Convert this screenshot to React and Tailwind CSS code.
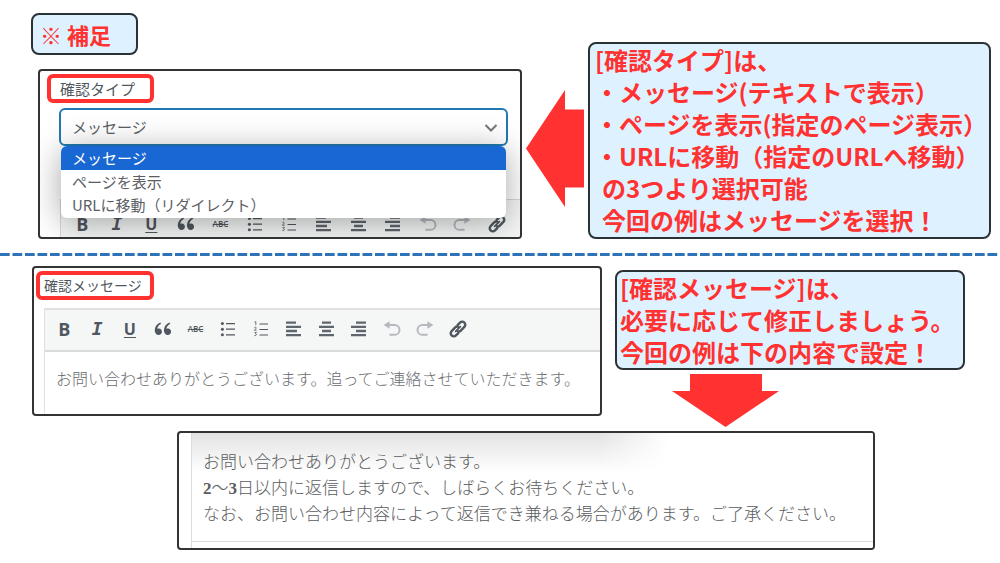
import { useState } from "react";
import clsx from "clsx";
import { RiDoubleQuotesL } from "react-icons/ri";

const options = ["メッセージ", "ページを表示", "URLに移動（リダイレクト）"];

const sans = "font-['Noto_Sans_CJK_JP',sans-serif]";
const serif = "font-['Liberation_Serif','Noto_Sans_CJK_JP',serif]";

const Bars = ({ rows }) => (
  <svg viewBox="0 0 16 16" className="size-4 text-[#5f666d]" stroke="currentColor" strokeWidth="2.3">
    {rows.map(([x1, x2], i) => (
      <path key={i} d={`M${x1} ${1.6 + i * 4.2}H${x2}`} />
    ))}
  </svg>
);

const BulletList = () => (
  <svg viewBox="0 0 16 16" className="size-4" fill="currentColor">
    <circle cx="2.4" cy="2.6" r="1.5" />
    <circle cx="2.4" cy="8.2" r="1.5" />
    <circle cx="2.4" cy="13.8" r="1.5" />
    <path d="M6 2h9v1.2H6zM6 7.6h9v1.2H6zM6 13.2h9v1.2H6z" />
  </svg>
);

const NumberedList = () => (
  <svg viewBox="0 0 16 16" className="size-4" fill="none" stroke="currentColor">
    <path d="M6.5 3H15M6.5 8.5H15M6.5 14H15" strokeWidth="1.2" />
    <path
      d="M1.6 1.2L2.8.6v3.6M1.4 6.6c.6-.9 2-.5 1.8.5L1.4 9.2h2.2M1.4 11.4h2L2.4 12.8c1.6 0 1.4 2.2-1 1.8"
      strokeWidth="0.8"
    />
  </svg>
);

const Undo = ({ flip }) => (
  <svg
    viewBox="0 0 18 16"
    className={clsx("h-4 w-[18px] text-[#b4b9be]", flip && "-scale-x-100")}
    fill="none"
    stroke="currentColor"
    strokeWidth="2"
  >
    <path d="M5 4h6.6a4.9 4.9 0 0 1 0 9.8H6.4" />
    <path d="M6.6.2v7.6L.6 4z" fill="currentColor" stroke="none" />
  </svg>
);

const Chain = () => (
  <svg
    viewBox="0 0 20 20"
    className="size-[22px]"
    fill="none"
    stroke="currentColor"
    strokeWidth="2.2"
    strokeLinecap="round"
  >
    <g transform="rotate(-45 10 10)">
      <path d="M7.6 12.8H4.6a2.8 2.8 0 0 1 0-5.6h4.6a2.8 2.8 0 0 1 2.4 1.4" />
      <path d="M12.4 7.2h3a2.8 2.8 0 0 1 0 5.6h-4.6a2.8 2.8 0 0 1-2.4-1.400" />
      <path d="M7 10h6" strokeWidth="1.6" />
    </g>
  </svg>
);

const tools = [
  ["Bold", <span className="font-['Open_Sans',sans-serif] text-lg/4 font-bold">B</span>],
  ["Italic", <span className="font-['DejaVu_Sans_Mono',monospace] text-lg/4 font-bold italic">I</span>],
  ["Underline", <span className="font-['Open_Sans',sans-serif] text-base/4 font-bold underline underline-offset-2">U</span>],
  ["Blockquote", <RiDoubleQuotesL className="size-[22px]" />],
  ["Strikethrough", <span className="font-['Open_Sans',sans-serif] text-[8px]/4 font-semibold line-through">ABC</span>],
  ["Bulleted list", <BulletList />],
  ["Numbered list", <NumberedList />],
  ["Align left", <Bars rows={[[0, 10], [0, 15], [0, 11], [0, 15]]} />],
  ["Align center", <Bars rows={[[3, 12], [0, 15], [3, 12], [0, 15]]} />],
  ["Align right", <Bars rows={[[5, 15], [0, 15], [5, 15], [0, 15]]} />],
  ["Undo", <Undo />],
  ["Redo", <Undo flip />],
  ["Link", <Chain />],
];

const Toolbar = ({ className }) => (
  <div role="toolbar" className={clsx("grid grid-cols-13 text-[#50575e]", className)}>
    {tools.map(([name, icon]) => (
      <button key={name} type="button" aria-label={name} className="flex h-5 items-center justify-center">
        {icon}
      </button>
    ))}
  </div>
);

const Callout = ({ children, className }) => (
  <div
    className={clsx(
      "rounded-lg border-2 border-[#2b3236] bg-[#def1ff] text-2xl/8 font-bold whitespace-nowrap text-[#ff3131]",
      className
    )}
  >
    {children}
  </div>
);

const panel = "overflow-hidden rounded-sm border-2 border-[#333] bg-white";
const fieldLabel =
  "rounded-md border-4 border-[#ff3131] bg-white text-[#50575e]";

const TypePanel = () => {
  const [value, setValue] = useState(options[0]);

  return (
    <div className={clsx(panel, "ml-[7px] pt-[3px]")}>
      <label htmlFor="confirm-type" className={clsx(fieldLabel, "ml-[7px] block w-[107px] pl-[9px] text-[15px]/[21px]")}>
        確認タイプ
      </label>
      <div className="relative z-10 mt-[5px] mr-3 ml-[19px]">
        <select
          id="confirm-type"
          value={value}
          onChange={(e) => setValue(e.target.value)}
          className="block h-[38px] w-full appearance-none rounded-md border-2 border-[#2079b0] bg-white pl-[11px] text-[15px] text-[#5b6065] outline-none"
        >
          {options.map((o) => (
            <option key={o}>{o}</option>
          ))}
        </select>
        <svg
          viewBox="0 0 14 8"
          className="pointer-events-none absolute top-4 right-2.5 h-2 w-3.5"
          fill="none"
          stroke="#777"
          strokeWidth="2"
        >
          <path d="M1.5 1L7 6.5 12.5 1" />
        </svg>
        <ul
          role="listbox"
          aria-label="確認タイプ"
          className="absolute inset-x-0.5 top-full overflow-hidden rounded-md bg-white pb-0.5 text-[15px]/[23px] text-[#5b6065] shadow-[0_4px_32px_rgba(0,0,0,0.35)]"
        >
          {options.map((o) => (
            <li
              key={o}
              role="option"
              aria-selected={o === value}
              onClick={() => setValue(o)}
              className={clsx("pl-[11px]", o === value && "bg-[#1967d2] pb-px text-white")}
            >
              {o}
            </li>
          ))}
        </ul>
      </div>
      <div className="mt-[53px] ml-5 border-t border-l border-[#d5d7d7] bg-[#f4f6f6] pt-3.5 pr-1.5 pb-[3px] pl-1">
        <Toolbar />
      </div>
    </div>
  );
};

const MessagePanel = () => (
  <div className={clsx(panel, "pt-[3px]")}>
    <label htmlFor="confirm-message" className={clsx(fieldLabel, "ml-0.5 block w-[118px] pl-1 text-sm/[21px]")}>
      確認メッセージ
    </label>
    <div className="mt-2 ml-2.5 border-t-2 border-l border-[#e0e2e2]">
      <div className="border-b-2 border-[#dadcdc] bg-[#f5f7f7] pt-[9px] pb-[11px] pl-[3px]">
        <Toolbar className="max-w-[426px]" />
      </div>
      <textarea
        id="confirm-message"
        rows={1}
        defaultValue="お問い合わせありがとうございます。追ってご連絡させていただきます。"
        className={clsx(
          "block h-[62px] w-full resize-none overflow-hidden pt-4 pl-[11px] text-base/6 font-light text-[#6a6d70] outline-none",
          serif
        )}
      />
    </div>
  </div>
);

export default function App() {
  return (
    <main className={clsx("min-h-screen bg-white", sans)}>
      <section className="flex items-end gap-1 pt-[13px] pr-[9px] pl-[31px]">
        <div className="flex-[491] basis-0">
          <h1 className="mb-3.5 w-[107px] rounded-lg border-2 border-[#2b3236] bg-[#def1ff] pl-[7px] text-[22px]/[38px] font-bold whitespace-nowrap text-[#ff3131]">
            ※ 補足
          </h1>
          <TypePanel />
        </div>
        <svg viewBox="0 0 58 117" className="mb-8 h-[117px] w-[58px] shrink-0" fill="#ff3131">
          <path d="M0 58.5L39 0v19.5h19v78H39V117z" />
        </svg>
        <div className="flex-[403] basis-0">
          <Callout className="pb-px pl-[5px]">
            <p>[確認タイプ]は、</p>
            <ul>
              <li>・メッセージ(テキストで表示）</li>
              <li>・ページを表示(指定のページ表示）</li>
              <li>・URLに移動（指定のURLへ移動）</li>
            </ul>
            <p className="pl-[7px]">の3つより選択可能</p>
            <p className="pl-[7px]">今回の例はメッセージを選択！</p>
          </Callout>
        </div>
      </section>

      <svg className="mt-3.5 block h-[3px] w-full" aria-hidden="true">
        <line x1="0" y1="1.5" x2="100%" y2="1.5" stroke="#2e73b8" strokeWidth="3" strokeDasharray="9.7 2.8" />
      </svg>

      <section className="mt-2.5 flex items-start gap-[13px] pr-[35px] pl-8">
        <div className="flex-[570] basis-0">
          <MessagePanel />
        </div>
        <div className="flex-[350] basis-0 pt-1">
          <Callout className="pl-[3px]">
            <p>[確認メッセージ]は、</p>
            <p>必要に応じて修正しましょう。</p>
            <p>今回の例は下の内容で設定！</p>
          </Callout>
          <svg viewBox="0 0 107 53" className="mt-1 ml-[57px] h-[53px] w-[107px]" fill="#ff3131">
            <path d="M18 0h72v17h17L53.500 53 0 17h18z" />
          </svg>
        </div>
      </section>

      <section className={clsx(panel, "mt-1 mr-[125px] ml-[177px] pl-3")}>
        <div className="border-l border-[#dcdcdc] bg-linear-to-b from-[#e2e2e2] to-white to-35% pb-1.5">
          <div className="-mt-px bg-linear-to-r from-transparent from-60% to-white to-70%">
            <div
              className={clsx(
                "border-b border-[#dcdcdc] pt-[18px] pb-[13px] pl-[11px] text-[17px]/[26px] font-light whitespace-nowrap text-[#5a5d60]",
                serif
              )}
            >
              <p>お問い合わせありがとうございます。</p>
              <p>
                <b className="font-bold">2</b>〜<b className="font-bold">3</b>
                日以内に返信しますので、しばらくお待ちください。
              </p>
              <p>なお、お問い合わせ内容によって返信でき兼ねる場合があります。ご了承ください。</p>
            </div>
          </div>
        </div>
      </section>
    </main>
  );
}
